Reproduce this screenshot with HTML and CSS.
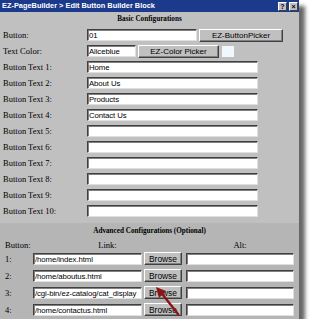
FILE: index.html
```html
<!DOCTYPE html>
<html lang="en">
<head>
	<meta charset="UTF-8">
	<title>Edit Button Builder Block</title>
	<link rel="stylesheet" href="styles.css">
</head>
<body>
	<div class="window">
		<div class="titlebar">
			<span class="title">EZ-PageBuilder &gt; Edit Button Builder Block</span>
			<span class="tb-btn">?</span>
			<span class="tb-btn">&#215;</span>
		</div>

		<div class="basic">
			<div class="section-title">Basic Configurations</div>
			<div class="form">
				<label>Button:</label>
				<div class="field">
					<input type="text" class="in-button" value="01">
					<button class="btn btn_picker">EZ-ButtonPicker</button>
				</div>
				<label>Text Color:</label>
				<div class="field">
					<input type="text" class="in-color" value="Aliceblue">
					<button class="btn btn_color">EZ-Color Picker</button>
					<span class="swatch"></span>
				</div>
				<label>Button Text 1:</label>
				<div class="field"><input type="text" class="in-text" value="Home"></div>
				<label>Button Text 2:</label>
				<div class="field"><input type="text" class="in-text" value="About Us"></div>
				<label>Button Text 3:</label>
				<div class="field"><input type="text" class="in-text" value="Products"></div>
				<label>Button Text 4:</label>
				<div class="field"><input type="text" class="in-text" value="Contact Us"></div>
				<label>Button Text 5:</label>
				<div class="field"><input type="text" class="in-text"></div>
				<label>Button Text 6:</label>
				<div class="field"><input type="text" class="in-text"></div>
				<label>Button Text 7:</label>
				<div class="field"><input type="text" class="in-text"></div>
				<label>Button Text 8:</label>
				<div class="field"><input type="text" class="in-text"></div>
				<label>Button Text 9:</label>
				<div class="field"><input type="text" class="in-text"></div>
				<label>Button Text 10:</label>
				<div class="field"><input type="text" class="in-text"></div>
			</div>
		</div>

		<div class="advanced">
			<div class="section-title">Advanced Configurations (Optional)</div>
			<div class="links">
				<span class="head">Button:</span>
				<span class="head head_link">Link:</span>
				<span class="head head_alt">Alt:</span>

				<span class="num">1:</span>
				<input type="text" class="in-link" value="/home/index.html">
				<button class="btn btn_browse">Browse</button>
				<input type="text" class="in-alt">

				<span class="num">2:</span>
				<input type="text" class="in-link" value="/home/aboutus.html">
				<button class="btn btn_browse">Browse</button>
				<input type="text" class="in-alt">

				<span class="num">3:</span>
				<input type="text" class="in-link" value="/cgi-bin/ez-catalog/cat_display">
				<button class="btn btn_browse">Browse</button>
				<input type="text" class="in-alt">

				<span class="num">4:</span>
				<input type="text" class="in-link" value="/home/contactus.html">
				<button class="btn btn_browse">Browse</button>
				<input type="text" class="in-alt">
			</div>
		</div>

		<!-- callout arrow over the third Browse button -->
		<svg class="arrow" width="40" height="40" viewBox="0 0 40 40">
			<line x1="28" y1="30" x2="13" y2="11" stroke="#8e1414" stroke-width="2.4" stroke-linecap="round"/>
			<polygon points="6,3 16,7 9,14" fill="#8e1414"/>
		</svg>
	</div>
</body>
</html>
```

FILE: styles.css
```css
body{
	margin: 0;
	padding: 0;
	background-color: #FFFFFF;
}

.window{
	position: relative;
	width: 299px;
	height: 319px;
	background-color: #C0C0C0;
	box-shadow: 6px 6px 4px rgba(0,0,0,0.6);
	display: flex;
	flex-direction: column;
}

.titlebar{
	height: 12px;
	background-color: #1B3A8C;
	display: flex;
	align-items: center;
	gap: 2px;
	padding: 0 1px 0 2px;
}

.title{
	flex: 1;
	color: #FFFFFF;
	font-family: "Liberation Sans", Arial, sans-serif;
	font-weight: bold;
	font-size: 7.4px;
	line-height: 12px;
	white-space: nowrap;
}

.tb-btn{
	width: 9px;
	height: 9px;
	box-sizing: border-box;
	background-color: #C0C0C0;
	border-top: 1px solid #FFFFFF;
	border-left: 1px solid #FFFFFF;
	border-right: 1px solid #404040;
	border-bottom: 1px solid #404040;
	font-family: "Liberation Sans", Arial, sans-serif;
	font-weight: bold;
	font-size: 7px;
	line-height: 7px;
	text-align: center;
	color: #000000;
}

.section-title{
	font-family: "Liberation Serif", "Times New Roman", serif;
	font-weight: bold;
	font-size: 7.2px;
	line-height: 15px;
	text-align: center;
}

.basic{
	padding-bottom: 4px;
}

.form{
	display: grid;
	grid-template-columns: 87px 1fr;
	grid-auto-rows: 16px;
	align-items: center;
}

label,
.head,
.num{
	font-family: "Liberation Serif", "Times New Roman", serif;
	font-size: 8.5px;
	color: #000000;
	white-space: nowrap;
}

label{
	padding-left: 3px;
}

.field{
	display: flex;
	align-items: center;
}

input{
	box-sizing: border-box;
	height: 12px;
	margin: 0;
	padding: 0 1px;
	background-color: #FFFFFF;
	border-top: 1px solid #404040;
	border-left: 1px solid #404040;
	border-right: 1px solid #E0E0E0;
	border-bottom: 1px solid #E0E0E0;
	box-shadow: inset 1px 1px 0 #808080;
	font-family: "Liberation Sans", Arial, sans-serif;
	font-size: 7.8px;
	letter-spacing: -0.1px;
	color: #000000;
	outline: none;
}

.in-button{ width: 110px; }
.in-color{ width: 49px; }
.in-text{ width: 171px; }

.btn{
	box-sizing: border-box;
	height: 13px;
	margin: 0;
	padding: 0;
	background-color: #C0C0C0;
	border-top: 1px solid #FFFFFF;
	border-left: 1px solid #FFFFFF;
	border-right: 1px solid #404040;
	border-bottom: 1px solid #404040;
	box-shadow: inset -1px -1px 0 #808080;
	font-family: "Liberation Sans", Arial, sans-serif;
	font-size: 8px;
	color: #000000;
}

.btn_picker{
	width: 84px;
	margin-left: 2px;
}

.btn_color{
	width: 81px;
	margin-left: 2px;
}

.swatch{
	width: 12px;
	height: 11px;
	margin-left: 3px;
	background-color: #F0F8FF;
}

.advanced{
	flex: 1;
	background-color: #B5B5B5;
	padding-top: 1px;
}

.links{
	display: grid;
	grid-template-columns: 31px 109px 38px 110px;
	column-gap: 2px;
	grid-template-rows: 12px repeat(4, 17px);
	align-items: start;
}

.head{
	line-height: 12px;
	padding-left: 5px;
}

.head_link{
	grid-column: 2 / 4;
	text-align: center;
	padding-left: 0;
}

.head_alt{
	text-align: center;
	padding-left: 2px;
}

.num{
	padding-left: 5px;
	line-height: 16px;
}

.links input,
.links .btn{
	margin-top: 2px;
}

.in-link{ width: 109px; }
.in-alt{ width: 108px; margin-left: 2px; }

.btn_browse{
	width: 38px;
	font-size: 8.4px;
	margin-top: 1px !important;
}

.arrow{
	position: absolute;
	left: 150px;
	top: 284px;
}
```
